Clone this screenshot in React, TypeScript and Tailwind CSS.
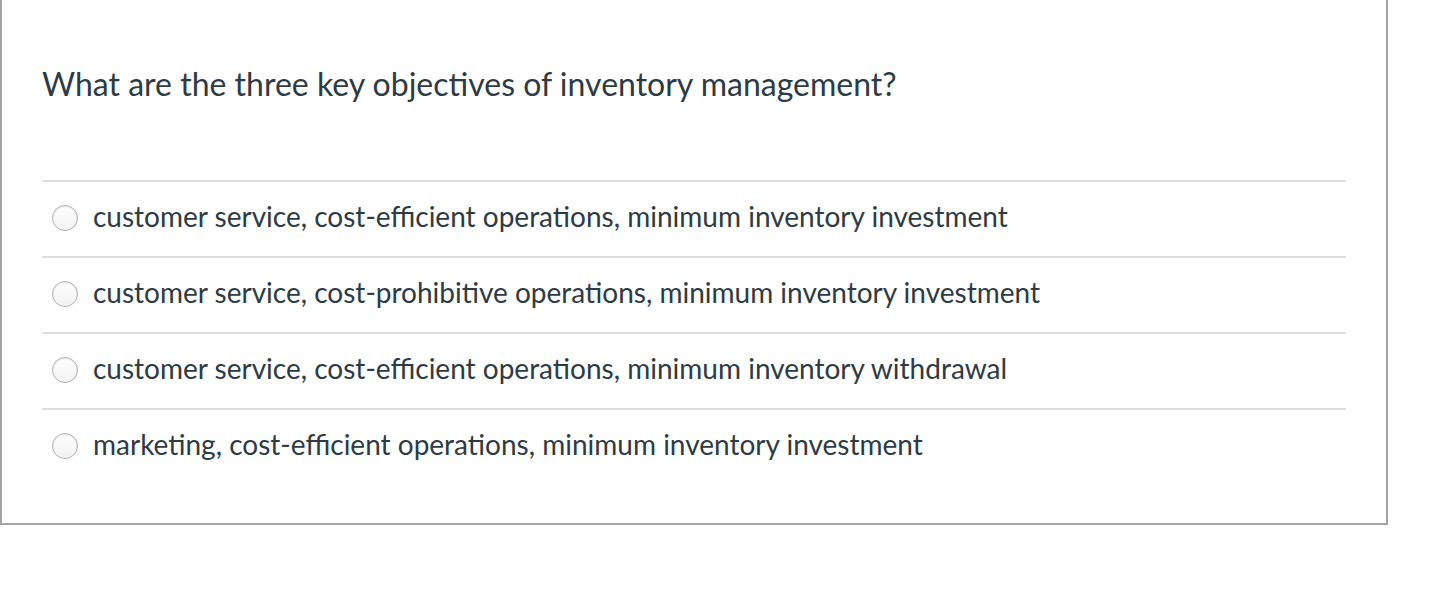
const options = [
  'customer service, cost-efficient operations, minimum inventory investment',
  'customer service, cost-prohibitive operations, minimum inventory investment',
  'customer service, cost-efficient operations, minimum inventory withdrawal',
  'marketing, cost-efficient operations, minimum inventory investment',
];

export default function App() {
  return (
    <div className="w-[1452px] h-[616px] bg-white font-['Lato',sans-serif] text-[#2d3b45]">
      <div className="w-[1388px] h-[525px] border-[2px] border-t-0 border-[#a5a5a5] pl-[40px] pr-[40px]">
        <h1 className="pt-[62px] text-[32px] leading-[44px]">
          What are the three key objectives of inventory management?
        </h1>
        <div className="mt-[74px]">
          {options.map((opt, i) => (
            <div key={i} className="flex items-center h-[76px] border-t-[2px] border-[#dedede]">
              <span className="ml-[10px] mb-[2px] w-[26px] h-[26px] rounded-full border border-[#b0b0b0] bg-gradient-to-b from-white to-[#f3f3f3] shadow-[inset_0_1px_2px_rgba(0,0,0,0.1)] shrink-0" />
              <span className="ml-[15px] mb-[7px] text-[28px]">{opt}</span>
            </div>
          ))}
        </div>
      </div>
    </div>
  );
}
